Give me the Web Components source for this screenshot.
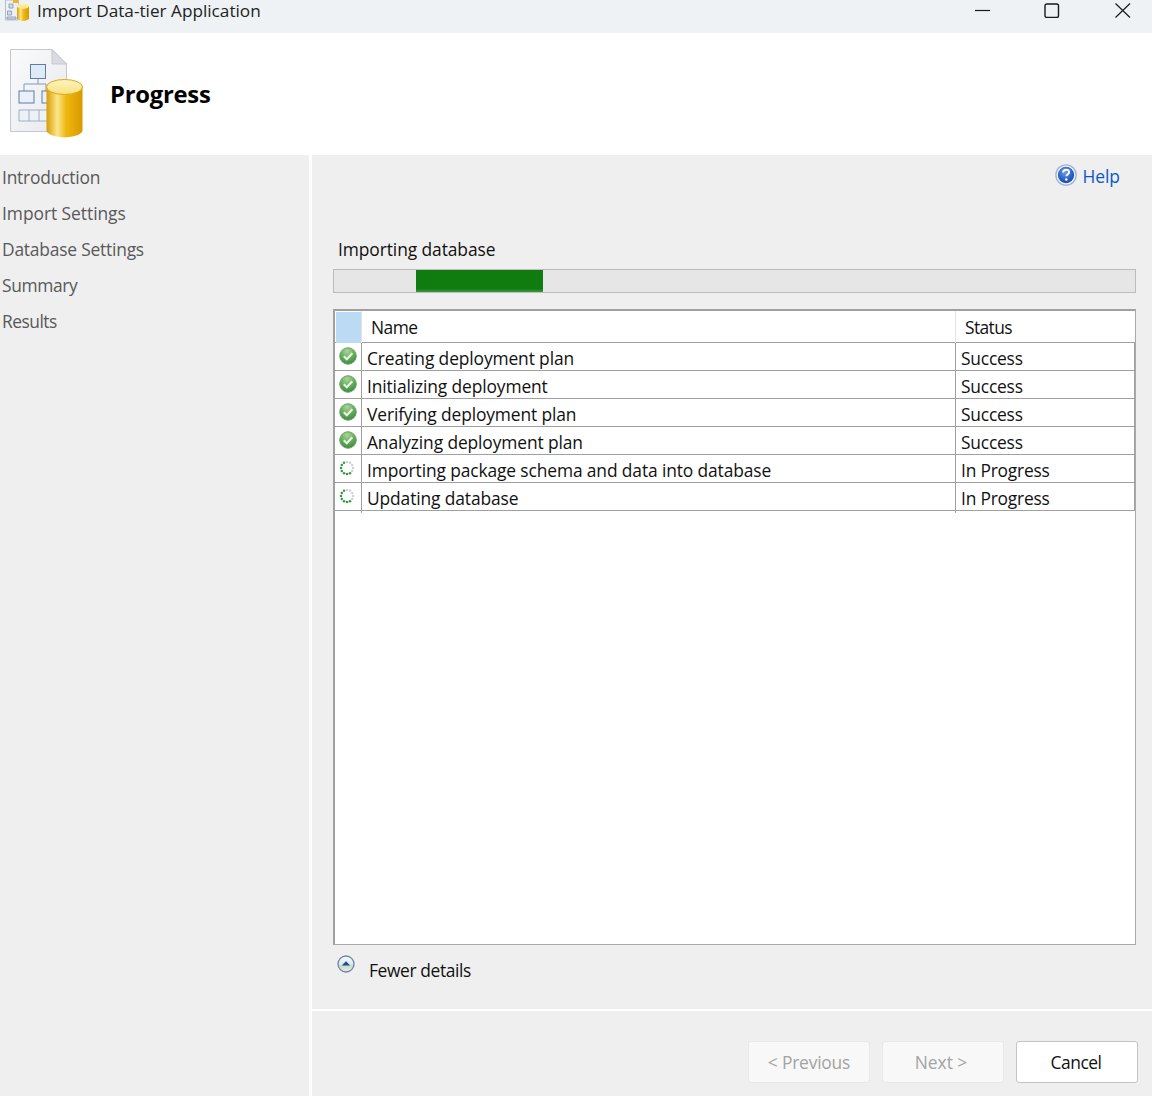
<!DOCTYPE html>
<html><head><meta charset="utf-8"><title>Import Data-tier Application</title>
<style>
html,body{margin:0;padding:0;background:#fff}
body{width:1152px;height:1096px;overflow:hidden;font-family:"Open Sans","Noto Sans","Liberation Sans",sans-serif;font-size:17.4px;color:#111;display:flex;flex-direction:column}
</style></head><body>
<dac-titlebar>Import Data-tier Application</dac-titlebar>
<dac-header>Progress</dac-header>
<dac-body>
  <dac-nav slot="nav">
    <dac-nav-item>Introduction</dac-nav-item>
    <dac-nav-item style="letter-spacing:-.04px">Import Settings</dac-nav-item>
    <dac-nav-item>Database Settings</dac-nav-item>
    <dac-nav-item style="letter-spacing:-.35px">Summary</dac-nav-item>
    <dac-nav-item style="letter-spacing:-.5px">Results</dac-nav-item>
  </dac-nav>
  <dac-help>Help</dac-help>
  <dac-label>Importing database</dac-label>
  <dac-progress></dac-progress>
  <dac-table>
    <dac-row state="ok" name="Creating deployment plan" status="Success"></dac-row>
    <dac-row state="ok" name="Initializing deployment" status="Success"></dac-row>
    <dac-row state="ok" name="Verifying deployment plan" status="Success"></dac-row>
    <dac-row state="ok" name="Analyzing deployment plan" status="Success"></dac-row>
    <dac-row state="busy" name="Importing package schema and data into database" status="In Progress"></dac-row>
    <dac-row state="busy" name="Updating database" status="In Progress"></dac-row>
  </dac-table>
  <dac-toggle>Fewer details</dac-toggle>
  <dac-footer slot="footer">
    <dac-button disabled style="letter-spacing:-.2px">&lt; Previous</dac-button>
    <dac-button disabled style="padding-right:4px">Next &gt;</dac-button>
    <dac-button style="padding-right:2px;letter-spacing:-.5px">Cancel</dac-button>
  </dac-footer>
</dac-body>
<script>
function def(name,html,init){
  customElements.define(name,class extends HTMLElement{
    constructor(){super();this.attachShadow({mode:'open'}).innerHTML=html;}
    connectedCallback(){if(init)init(this);}
  });
}
const drum=`<linearGradient id="cy" x1="0" x2="1" y1="0" y2="0"><stop offset="0" stop-color="#d99c00"/><stop offset=".3" stop-color="#fbe68c"/><stop offset=".55" stop-color="#eeb70f"/><stop offset="1" stop-color="#d89a00"/></linearGradient><linearGradient id="cyt" x1="0" x2="0" y1="0" y2="1"><stop offset="0" stop-color="#fdf3c0"/><stop offset="1" stop-color="#f9e27f"/></linearGradient>`;
def('dac-titlebar',`<style>
:host{display:flex;height:33px;background:#eff2f5;flex:none;overflow:hidden;align-items:flex-start}
svg{display:block;flex:none}
.app{margin:0 8px 0 5px}
.t{font-size:17.2px;line-height:21px;color:#222;flex:1}
.c{margin-top:3px}
</style>
<svg class="app" width="24" height="22" viewBox="0 0 24 22"><defs>${drum}</defs>
<path d="M.5 0h13v20H.5z" fill="#eef0f3" stroke="#b9bec6"/><path d="M4 4h4v4H4zM2.500 11h4v4h-4zM2 17h9v2H2z" fill="#cfdff0" stroke="#7d95b5" stroke-width=".8"/>
<path d="M12 6h12v13q-6 4-12 0z" fill="url(#cy)"/><ellipse cx="18" cy="6" rx="6" ry="3" fill="url(#cyt)"/><path d="M8 0h5v3H8z" fill="#e8b82a"/></svg>
<span class="t"><slot></slot></span>
<svg class="c" width="16" height="14" viewBox="0 0 16 14" style="margin-right:53px"><path d="M0 7.500h15" stroke="#1a1a1a" stroke-width="1.200"/></svg>
<svg class="c" width="16" height="15" viewBox="0 0 16 15" style="margin-right:55px"><rect x="1" y="1" width="13.500" height="13.500" rx="1.800" fill="none" stroke="#1a1a1a" stroke-width="1.400"/></svg>
<svg class="c" width="16" height="15" viewBox="0 0 16 15" style="margin-right:21px"><path d="M.5 .5l14.500 14M15 .5L.5 14.500" stroke="#1a1a1a" stroke-width="1.200" fill="none"/></svg>`);
def('dac-header',`<style>
:host{display:flex;align-items:center;height:122px;background:#fff;flex:none}
svg{display:block;flex:none;margin-right:10px}
b{font-size:23.800px;font-weight:700;color:#000;letter-spacing:-.01em}
</style>
<svg width="100" height="96" viewBox="0 46 100 96"><defs>${drum}
<linearGradient id="pg" x1="0" x2="1" y1="0" y2="1"><stop offset="0" stop-color="#fbfbfc"/><stop offset="1" stop-color="#e6e8ec"/></linearGradient></defs>
<path d="M10.500 49.500H52L66.500 64V131.500H10.500z" fill="url(#pg)" stroke="#c4c7cd"/>
<path d="M52 49.500V64H66.500z" fill="#d9dbe0" stroke="#c4c7cd"/>
<path d="M38 71v13M24 91v-7h22v7" fill="none" stroke="#7f99bc"/>
<rect x="30.500" y="64.500" width="15" height="14" fill="#dfeaf7" stroke="#5f7da4"/>
<rect x="19" y="91" width="15" height="12" fill="#e9f0f9" stroke="#5f7da4"/>
<rect x="42" y="91" width="12" height="12" fill="#e9f0f9" stroke="#5f7da4"/>
<path d="M19 110h30v11H19zM29 110v11M39 110v11" fill="#eef1f5" stroke="#a0aec0"/>
<path d="M46.500 86v44q0 6 18 7.500q18-1.500 18-7.500V86z" fill="url(#cy)"/>
<ellipse cx="64.500" cy="87" rx="18" ry="7.500" fill="url(#cyt)" stroke="#dfa90d"/>
</svg><b><slot></slot></b>`);
def('dac-body',`<style>
:host{display:flex;flex:1;min-height:0;background:#fff}
.l{width:309px;flex:none;background:#efefef;margin-right:3px}
.r{flex:1;display:flex;flex-direction:column;min-width:0}
.m{flex:1;background:#efefef;padding:0 16px 0 21px;display:flex;flex-direction:column;min-height:0}
.f{flex:none;margin-top:2px}
</style>
<div class="l"><slot name="nav"></slot></div>
<div class="r"><div class="m"><slot></slot></div><div class="f"><slot name="footer"></slot></div></div>`);
def('dac-nav',`<style>:host{display:block;padding-top:4px}</style><slot></slot>`);
def('dac-nav-item',`<style>:host{display:block;height:36px;line-height:36px;padding-left:2px;color:#595959;letter-spacing:-.012em}</style><slot></slot>`);
def('dac-help',`<style>
:host{display:flex;justify-content:flex-end;align-items:center;gap:5px;height:28px;margin-top:7px;padding-right:16px;color:#0b57c9}
svg{display:block;position:relative;top:-1px}
</style>
<svg width="22" height="22" viewBox="0 0 22 22"><defs><radialGradient id="h" cx=".45" cy=".35" r=".7"><stop offset="0" stop-color="#6e9fe8"/><stop offset=".6" stop-color="#2a5fc4"/><stop offset="1" stop-color="#17409a"/></radialGradient></defs>
<circle cx="11" cy="11" r="10.800" fill="#9fb5d8"/><circle cx="11" cy="11" r="8.800" fill="url(#h)" stroke="#eef3fb" stroke-width="1.300"/>
<path d="M8 8.500q.3-2.700 3.100-2.700q3 0 3 2.400c0 2-2.700 2-2.700 4.100" fill="none" stroke="#fff" stroke-width="1.900"/><circle cx="11.300" cy="15.500" r="1.200" fill="#fff"/></svg><span><slot></slot></span>`);
def('dac-label',`<style>:host{display:block;height:24px;line-height:24px;margin-top:47px;padding-left:5px;color:#111;letter-spacing:-.005em}</style><slot></slot>`);
def('dac-progress',`<style>
:host{display:block;height:24px;box-sizing:border-box;border:1px solid #bcbcbc;background:#e6e6e6;margin-top:8px;flex:none}
i{display:block;height:100%;width:127px;margin-left:82px;background:linear-gradient(#107c10 0,#107c10 85%,#3d9a3d 100%)}
</style><i></i>`);
def('dac-table',`<style>
:host{display:block;height:636px;box-sizing:border-box;margin-top:16px;flex:none;background:#fff;border:1px solid #a9a9a9;border-top:2px solid #a0a0a0;border-left:2px solid #a0a0a0;overflow:hidden}
.h{display:grid;grid-template-columns:26px 594px 1fr;height:31px;border-bottom:1px solid #a0a0a0;box-sizing:content-box;line-height:32px}
.b{background:#bbdaf3;margin-left:1px;margin-top:1px}
.n{padding-left:9px;border-left:1px solid #e4e4e4;letter-spacing:-.03em}
.s{padding-left:9px;border-left:1px solid #e4e4e4;letter-spacing:-.035em}
</style>
<div class="h"><div class="b"></div><div class="n">Name</div><div class="s">Status</div></div><slot></slot>`);
def('dac-row',`<style>
:host{display:grid;grid-template-columns:26px 594px 1fr;height:28px;box-sizing:border-box;border-bottom:1px solid #a0a0a0;line-height:30px;color:#111;border-right:1px solid #a0a0a0}
.i{display:flex;padding:4px 0 0 4px}
.n{padding-left:5px;border-left:1px solid #a0a0a0;white-space:nowrap;letter-spacing:-.007em}
.s{padding-left:5px;border-left:1px solid #a0a0a0;white-space:nowrap;letter-spacing:-.012em}
svg{display:block}
</style><div class="i" id="i"></div><div class="n" id="n"></div><div class="s" id="s"></div>`,el=>{
  const r=el.shadowRoot;
  r.getElementById('n').textContent=el.getAttribute('name');
  r.getElementById('s').textContent=el.getAttribute('status');
  if(el.getAttribute('state')==='ok'){
    r.getElementById('i').innerHTML=`<svg width="18" height="18" viewBox="0 0 18 18"><defs><radialGradient id="g" cx=".45" cy=".2" r=".85"><stop offset="0" stop-color="#a8d497"/><stop offset=".55" stop-color="#62ab58"/><stop offset="1" stop-color="#3a8340"/></radialGradient></defs><circle cx="9" cy="9" r="8.300" fill="url(#g)" stroke="#6a9f69" stroke-width=".9"/><path d="M4.800 9.300l3 3 5.500-6" fill="none" stroke="#eaf4e4" stroke-width="2.100"/></svg>`;
  }else{
    let d='';
    for(let k=0;k<12;k++){
      const a=k*Math.PI/6,x=8+6*Math.cos(a),y=9+6*Math.sin(a);
      const c=(k>=2&&k<=8)?'#2f9e3c':'#cfd3cf';
      d+=`<circle cx="${x.toFixed(2)}" cy="${y.toFixed(2)}" r="1.250" fill="${c}"/>`;
    }
    r.getElementById('i').innerHTML=`<svg width="18" height="18" viewBox="0 0 18 18">${d}</svg>`;
  }
});
def('dac-toggle',`<style>
:host{display:flex;align-items:flex-start;height:64px;padding-left:4px;color:#111;letter-spacing:-.022em}
svg{display:block;margin:10px 14px 0 0;flex:none}
span{line-height:24px;margin-top:13px}
</style>
<svg width="18" height="18" viewBox="0 0 18 18"><defs><linearGradient id="t" x1="0" x2="0" y1="0" y2="1"><stop offset="0" stop-color="#fafcff"/><stop offset=".55" stop-color="#dbe6f0"/><stop offset=".56" stop-color="#c6d8c5"/><stop offset="1" stop-color="#e8f0e4"/></linearGradient></defs><circle cx="9" cy="9" r="8" fill="url(#t)" stroke="#6f83a8" stroke-width="1.300"/><path d="M4.800 10.500L9 6.300l4.200 4.200z" fill="#1f4f8c"/></svg><span><slot></slot></span>`);
def('dac-footer',`<style>:host{display:flex;justify-content:flex-end;gap:12px;height:85px;box-sizing:border-box;padding:30px 14px 0 0;background:#efefef}</style><slot></slot>`);
def('dac-button',`<style>
:host{display:flex;align-items:center;justify-content:center;width:122px;height:42px;box-sizing:border-box;border:1px solid #c4c4c4;border-radius:3px;background:#fff;color:#111}
:host([disabled]){background:#f8f8f8;border-color:#e8e8e8;color:#a3a3a3}
</style><slot></slot>`);
</script>
</body></html>
